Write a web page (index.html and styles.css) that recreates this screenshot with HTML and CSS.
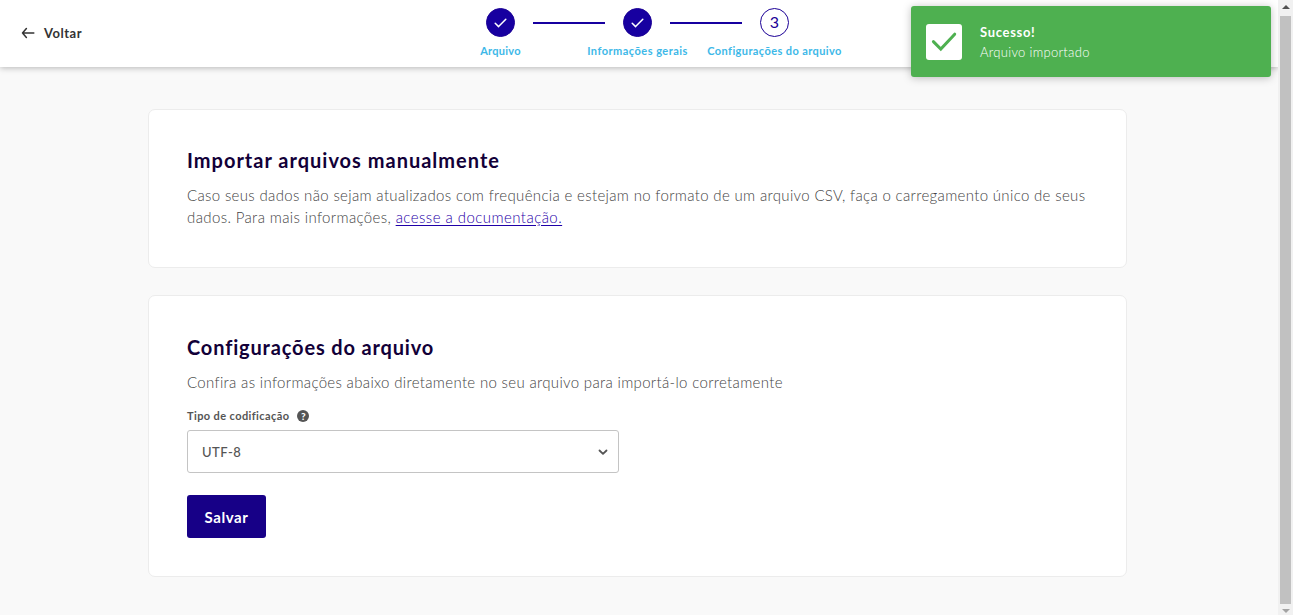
FILE: index.html
```html
<!DOCTYPE html>
<html lang="pt-BR">
<head>
<meta charset="utf-8">
<title>Importar arquivos</title>
<link rel="stylesheet" href="styles.css">
</head>
<body>
<div class="page">
  <header class="header">
    <a class="back"><svg width="14" height="12" viewBox="0 0 14 12"><path d="M1.5 6h11.3M5.4 1.6 1.5 6l3.9 4.4" fill="none" stroke="#333" stroke-width="1.5" stroke-linecap="round" stroke-linejoin="round"/></svg><span class="back-text">Voltar</span></a>
    <div class="stepper">
      <div class="track">
        <span class="dot done"><svg width="13" height="10" viewBox="0 0 13 10"><path d="M1.2 5.2 4.6 8.6 11.8 1.2" fill="none" stroke="#fff" stroke-width="1.5" stroke-linecap="round" stroke-linejoin="round"/></svg></span>
        <span class="line"></span>
        <span class="dot done"><svg width="13" height="10" viewBox="0 0 13 10"><path d="M1.2 5.2 4.6 8.6 11.8 1.2" fill="none" stroke="#fff" stroke-width="1.5" stroke-linecap="round" stroke-linejoin="round"/></svg></span>
        <span class="line"></span>
        <span class="dot">3</span>
      </div>
      <div class="labels"><span class="l1">Arquivo</span><span class="l2">Informações gerais</span><span class="l3">Configurações do arquivo</span></div>
    </div>
  </header>
  <main class="content">
    <section class="card intro">
      <h1 class="title t1">Importar arquivos manualmente</h1>
      <p class="text"><span class="p1">Caso seus dados não sejam atualizados com frequência e estejam no formato de um arquivo CSV, faça o carregamento único de seus</span><br><span class="p2">dados. Para mais informações, </span><a class="link">acesse a documentação.</a></p>
    </section>
    <section class="card settings">
      <h2 class="title t2">Configurações do arquivo</h2>
      <p class="text p3">Confira as informações abaixo diretamente no seu arquivo para importá-lo corretamente</p>
      <div class="field-label"><span class="field-name">Tipo de codificação</span><span class="help">?</span></div>
      <div class="select"><span class="value">UTF-8</span><svg class="chevron" width="10" height="7" viewBox="0 0 10 7"><path d="M1.5 1.5 5 4.9 8.5 1.5" fill="none" stroke="#555" stroke-width="1.8" stroke-linecap="round" stroke-linejoin="round"/></svg></div>
      <button class="save"><span class="save-text">Salvar</span></button>
    </section>
  </main>
</div>
<div class="scrollbar"><span class="arrow up"></span><span class="thumb"></span><span class="arrow down"></span></div>
<div class="toast">
  <span class="toast-icon"><svg width="36" height="36" viewBox="0 0 36 36"><path d="M7.4 17.6 14.8 25 28.7 10.2" fill="none" stroke="#4eb050" stroke-width="3" stroke-linecap="round"/></svg></span>
  <div class="toast-body"><strong class="toast-title">Sucesso!</strong><span class="toast-text">Arquivo importado</span></div>
</div>
</body>
</html>
```
FILE: styles.css
```css
* { box-sizing: border-box; }
body { margin: 0; height: 615px; overflow: hidden; display: flex; background: #f9f9f9; font-family: Lato, "Open Sans", sans-serif; font-variant-ligatures: none; }
.page { width: 1278px; height: 615px; }
.header { height: 67px; display: flex; background: #fff; box-shadow: 0 1px 6px rgba(0,0,0,.27); padding-left: 21px; clip-path: inset(0 0 -12px 0); }
.back { width: 411px; height: 66px; display: flex; align-items: center; gap: 9px; color: #333; font-size: 13px; font-weight: 700; letter-spacing: .5px; white-space: nowrap; }
.stepper { width: 411px; padding-top: 8px; }
.track { display: flex; align-items: center; justify-content: center; gap: 18px; }
.dot { width: 29px; height: 29px; border: 1px solid #1b0096; border-radius: 50%; display: flex; align-items: center; justify-content: center; color: #1b0096; font-size: 16px; line-height: 25px; padding-bottom: 2px; font-weight: 400; }
.done { background: #1700a0; padding: 0; }
.line { width: 72px; height: 2px; background: #1700a0; }
.labels { display: grid; grid-template-columns: 137px 137px 137px; justify-items: center; margin-top: 7px; color: #3db8e8; font-size: 11px; line-height: 14px; font-weight: 700; white-space: nowrap; }
.l1 { letter-spacing: .25px; }
.l2 { letter-spacing: .48px; }
.l3 { letter-spacing: .4px; }
.content { padding: 42px 0 0 148px; display: flex; flex-direction: column; gap: 27px; }
.card { width: 979px; background: #fff; border: 1px solid #ececec; border-radius: 7px; padding: 38px; }
.intro { height: 159px; padding-top: 37px; }
.settings { height: 282px; }
.title { margin: 0; font-size: 20px; line-height: 26px; font-weight: 700; color: #120038; white-space: nowrap; }
.t1 { letter-spacing: 1px; }
.t2 { letter-spacing: .84px; }
.text { margin: 11px 0 0; color: #444; font-size: 15px; line-height: 22px; font-weight: 300; white-space: nowrap; }
.p1 { letter-spacing: .337px; }
.p2 { letter-spacing: .37px; }
.p3 { letter-spacing: .33px; }
.link { color: #1f00a8; letter-spacing: .45px; text-decoration: underline; text-underline-offset: 2px; }
.field-label { display: flex; align-items: center; gap: 8px; height: 14px; margin-top: 15px; color: #555; font-size: 11px; font-weight: 700; }
.field-name { letter-spacing: .4px; }
.help { width: 12px; height: 12px; margin-top: 1px; border-radius: 50%; background: #555; color: #fff; font-size: 10px; line-height: 12px; text-align: center; font-weight: 900; }
.select { width: 432px; height: 43px; margin-top: 8px; border: 1px solid #c4c4c4; border-radius: 3px; padding: 0 10px 0 14px; display: flex; align-items: center; justify-content: space-between; color: #555; font-size: 13px; font-weight: 500; letter-spacing: .5px; }
.chevron { margin-top: 2px; }
.save { display: block; width: 79px; height: 43px; margin-top: 22px; padding: 0; border: 0; border-radius: 3px; background: #170087; color: #fff; font-family: inherit; font-size: 15px; font-weight: 700; letter-spacing: .6px; }
.scrollbar { width: 15px; height: 615px; background: #f1f1f1; display: flex; flex-direction: column; align-items: center; padding: 5px 0 2px; }
.arrow { border: 4px solid transparent; height: 0; width: 0; flex: none; }
.up { border-top: 0; border-bottom-color: #505050; }
.down { border-bottom: 0; border-top-color: #a3a3a3; margin-top: 5px; }
.thumb { width: 11px; height: 588px; flex: none; margin-top: 7px; background: #c1c1c1; }
.toast { position: absolute; left: 911px; top: 6px; width: 360px; height: 71px; display: flex; align-items: center; gap: 18px; padding-left: 15px; border-radius: 3px; background: #4eb050; color: #fff; box-shadow: 0 1px 8px rgba(0,0,0,.25); }
.toast-icon { width: 36px; height: 36px; background: #fff; border-radius: 3px; }
.toast-body { display: flex; flex-direction: column; font-size: 13px; line-height: 20px; white-space: nowrap; }
.toast-body > * { align-self: flex-start; }
.toast-title { font-weight: 700; letter-spacing: .68px; }
.toast-text { font-weight: 300; letter-spacing: .3px; }
```
